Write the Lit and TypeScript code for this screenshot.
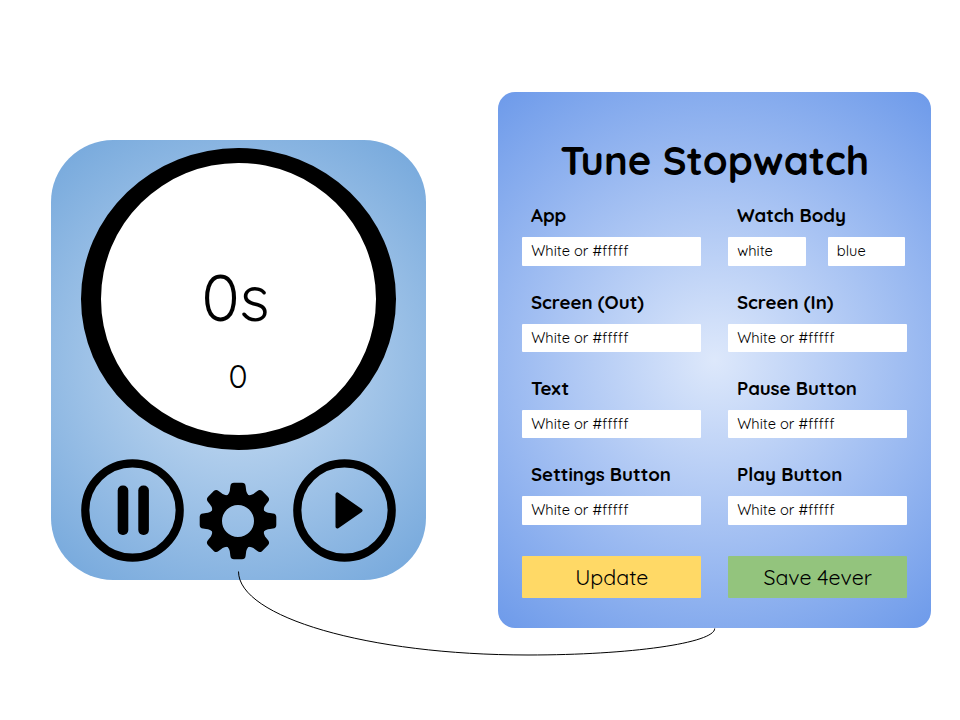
import { LitElement, html, svg, css } from "lit";
import { customElement } from "lit/decorators.js";

interface Field {
  label: string;
  key: string;
  values: string[];
}

const PLACEHOLDER = "White or #fffff";

const FIELDS: Field[] = [
  { label: "App", key: "app", values: [PLACEHOLDER] },
  { label: "Watch Body", key: "body", values: ["white", "blue"] },
  { label: "Screen (Out)", key: "out", values: [PLACEHOLDER] },
  { label: "Screen (In)", key: "in", values: [PLACEHOLDER] },
  { label: "Text", key: "text", values: [PLACEHOLDER] },
  { label: "Pause Button", key: "pause", values: [PLACEHOLDER] },
  { label: "Settings Button", key: "settings", values: [PLACEHOLDER] },
  { label: "Play Button", key: "play", values: [PLACEHOLDER] },
];

@customElement("stop-watch")
export class StopWatch extends LitElement {
  static styles = css`
    :host {
      box-sizing: border-box;
      display: flex;
      flex-direction: column;
      align-items: center;
      width: 375.5px;
      height: 440.7px;
      padding-top: 8.6px;
      border-radius: 62px;
      background: radial-gradient(circle farthest-corner, #cde0f4, #72a6db);
      font-family: Quicksand, Lato, sans-serif;
      font-weight: 400;
    }
    .screen {
      box-sizing: border-box;
      display: flex;
      flex-direction: column;
      align-items: center;
      width: 314.5px;
      height: 301.7px;
      padding-top: 96px;
      border: solid #000;
      border-width: 15px 20px;
      border-radius: 50%;
      background: #fff;
    }
    .seconds {
      font-size: 64px;
      line-height: 76px;
      padding-right: 6px;
    }
    .laps {
      font-size: 32px;
      line-height: 40px;
      margin-top: 20.5px;
      padding-right: 1px;
    }
    .controls {
      display: flex;
      justify-content: space-between;
      width: 315px;
      margin-top: 9px;
    }
    svg {
      display: block;
    }
    .gear {
      margin-top: 22.6px;
    }
  `;

  render() {
    const teeth = [0, 45, 90, 135, 180, 225, 270, 315];
    return html`
      <div class="screen">
        <div class="seconds">0s</div>
        <div class="laps">0</div>
      </div>
      <div class="controls">
        <svg width="103" height="103" viewBox="-51.5 -51.5 103 103">
          <circle r="47.2" fill="none" stroke="#000" stroke-width="8.2" />
          <rect x="-14.8" y="-25" width="10.6" height="49.5" rx="5" />
          <rect x="5.8" y="-25" width="10.6" height="49.5" rx="5" />
        </svg>
        <svg class="gear" width="78" height="78" viewBox="-39 -39 78 78">
          <circle r="22" fill="none" stroke="#000" stroke-width="12" />
          ${teeth.map(
            (a) => svg`<path transform="rotate(${a})"
              d="M-12-24Q-8-28-8-32L-7.6-35Q-7.2-38.3-4-38.3H4Q7.2-38.3 7.6-35L8-32Q8-28 12-24Z" />`
          )}
        </svg>
        <svg width="103" height="103" viewBox="-51.5 -51.5 103 103">
          <circle r="47.2" fill="none" stroke="#000" stroke-width="8.2" />
          <path d="M-7.2-16.3V16.3L16.2 0Z" stroke="#000" stroke-width="3.6" stroke-linejoin="round" />
        </svg>
      </div>
    `;
  }
}

@customElement("tune-panel")
export class TunePanel extends LitElement {
  static styles = css`
    :host {
      box-sizing: border-box;
      display: block;
      width: 432.5px;
      height: 536.5px;
      padding: 45px 23.5px 0;
      border-radius: 17px;
      background: radial-gradient(circle farthest-corner, #dde8fb, #6d9aea);
      font-family: Quicksand, Lato, sans-serif;
      color: #000;
    }
    h1 {
      margin: 0;
      font-size: 40px;
      line-height: 46px;
      font-weight: 700;
      text-align: center;
      white-space: nowrap;
    }
    .fields {
      display: grid;
      grid-template-columns: 179.5px 179.5px;
      grid-auto-rows: 86.33px;
      column-gap: 26.5px;
      margin-top: 19px;
    }
    .label {
      padding: 1.6px 0 0 9px;
      font-size: 18.67px;
      line-height: 24px;
      height: 33.5px;
      box-sizing: border-box;
      font-weight: 700;
      white-space: nowrap;
    }
    .inputs {
      display: flex;
      gap: 22px;
      margin-top: 2px;
    }
    .input {
      box-sizing: border-box;
      flex: 1;
      height: 28.3px;
      padding-left: 9.2px;
      border-radius: 1px;
      background: #fff;
      font-size: 14.67px;
      line-height: 28.4px;
      white-space: nowrap;
    }
    .half {
      flex: 0 0 77.7px;
    }
    .actions {
      display: flex;
      gap: 26.5px;
      margin-top: 8.7px;
    }
    .action {
      width: 179.5px;
      height: 42px;
      border-radius: 1px;
      font-size: 21.33px;
      line-height: 42px;
      text-align: center;
    }
    .update {
      background: #ffd966;
    }
    .save {
      background: #93c47d;
    }
  `;

  render() {
    return html`
      <h1>Tune Stopwatch</h1>
      <div class="fields">
        ${FIELDS.map(
          (f) => html`<div class="field">
            <div class="label ${f.key}">${f.label}</div>
            <div class="inputs">
              ${f.values.map(
                (v) => html`<div class="input ${f.values.length > 1 ? "half" : ""}">${v}</div>`
              )}
            </div>
          </div>`
        )}
      </div>
      <div class="actions">
        <div class="action update">Update</div>
        <div class="action save">Save 4ever</div>
      </div>
    `;
  }
}

@customElement("app-root")
export class AppRoot extends LitElement {
  static styles = css`
    :host {
      position: relative;
      box-sizing: border-box;
      display: flex;
      align-items: center;
      gap: 72.3px;
      width: 960px;
      height: 720px;
      padding-left: 50.7px;
      background: #fff;
      overflow: hidden;
    }
    .link {
      position: absolute;
      inset: 0;
      fill: none;
      stroke: #000;
      stroke-width: 1;
    }
  `;

  render() {
    return html`
      <stop-watch></stop-watch>
      <tune-panel></tune-panel>
      <svg class="link" width="960" height="720" viewBox="0 0 960 720">
        <path d="M238.5 571.5C238.5 617 368 655 528 655C631 655 714.7 643 714.7 628.5" />
      </svg>
    `;
  }
}
